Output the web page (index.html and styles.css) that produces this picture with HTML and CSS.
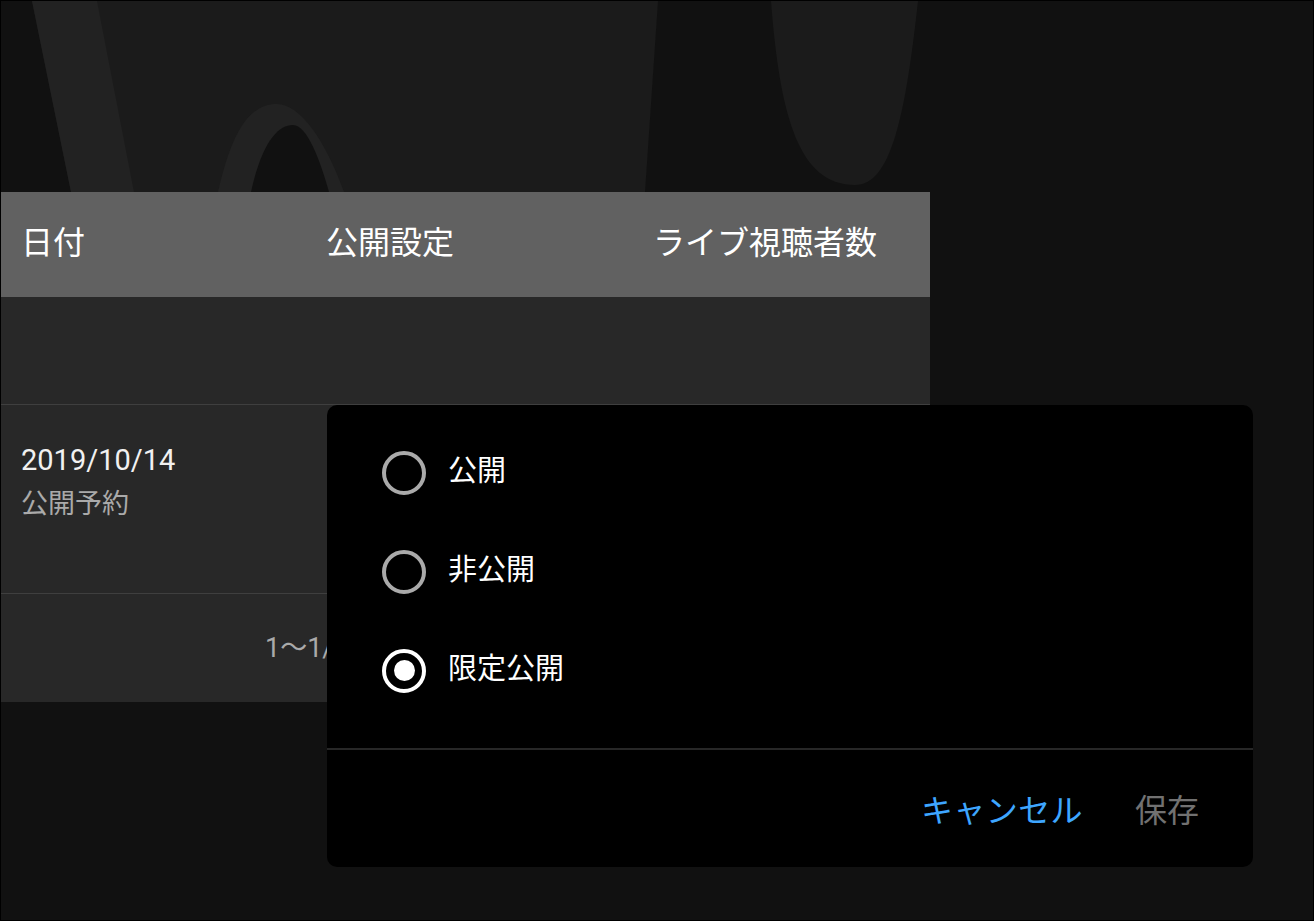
FILE: index.html
```html
<!DOCTYPE html>
<html lang="ja">
<head>
<meta charset="utf-8">
<title>公開設定</title>
<link rel="stylesheet" href="styles.css">
</head>
<body>
<div class="page">
  <div class="hero">
    <svg class="hero-art" width="1312" height="191" viewBox="1 1 1312 191" xmlns="http://www.w3.org/2000/svg">
      <rect x="1" y="1" width="1312" height="191" fill="#111111"/>
      <path d="M32 1 L658 1 L645 192 L71 192 Z" fill="#1b1b1b"/>
      <path d="M32 1 L97 1 L134 192 L71 192 Z" fill="#222222"/>
      <path d="M218 192 C232 130 250 104 277 104 C300 104 325 140 344 192 Z" fill="#222222"/>
      <path d="M251 192 C262 142 278 125 293 125 C307 125 320 160 329 192 Z" fill="#111111"/>
      <path d="M771 1 C780 120 800 185 855 185 C890 185 905 120 918 1 Z" fill="#1b1b1b"/>
    </svg>
  </div>

  <div class="table">
    <div class="thead">
      <div class="th">日付</div>
      <div class="th">公開設定</div>
      <div class="th">ライブ視聴者数</div>
    </div>
    <div class="row-empty"></div>
    <div class="row">
      <div class="cell-date">
        <div class="date">2019/10/14</div>
        <div class="status">公開予約</div>
      </div>
    </div>
    <div class="tfoot">
      <span class="range">1～1/1</span>
    </div>
  </div>

  <div class="dialog">
    <div class="options">
      <div class="option">
        <span class="radio"></span>
        <span class="label">公開</span>
      </div>
      <div class="option">
        <span class="radio"></span>
        <span class="label">非公開</span>
      </div>
      <div class="option">
        <span class="radio checked"><span class="dot"></span></span>
        <span class="label">限定公開</span>
      </div>
    </div>
    <div class="actions">
      <span class="btn btn-cancel">キャンセル</span>
      <span class="btn btn-save">保存</span>
    </div>
  </div>
</div>
</body>
</html>
```

FILE: styles.css
```css
* { box-sizing: border-box; }
html, body { margin: 0; padding: 0; background: #111111; }
body {
  font-family: Roboto, "Noto Sans CJK JP", sans-serif;
  color: #ffffff;
}
.page {
  position: relative;
  width: 1314px;
  height: 921px;
  border: 1px solid #000000;
  background: #111111;
  overflow: hidden;
}
.hero { height: 191px; }
.hero-art { display: block; }

.table { width: 929px; background: #282828; }
.thead {
  display: grid;
  grid-template-columns: 305px 327px 1fr;
  height: 105px;
  align-items: center;
  background: #616161;
  padding-left: 20px;
}
.th {
  font-size: 32px;
  color: #ffffff;
  line-height: 1;
  padding-bottom: 4px;
}
.row-empty {
  height: 108px;
  border-bottom: 1px solid #3f3f3f;
}
.row {
  height: 189px;
  border-bottom: 1px solid #3f3f3f;
  padding: 36px 0 0 20px;
}
.date {
  font-size: 29px;
  line-height: 38px;
  color: #f1f1f1;
}
.status {
  font-size: 27px;
  line-height: 50px;
  color: #aaaaaa;
}
.tfoot {
  height: 108px;
  padding: 34px 0 0 264px;
}
.range {
  font-size: 27px;
  color: #aaaaaa;
  line-height: 40px;
}

.dialog {
  position: absolute;
  left: 326px;
  top: 404px;
  width: 926px;
  height: 462px;
  background: #000000;
  border-radius: 10px;
  display: flex;
  flex-direction: column;
}
.options {
  padding: 18px 0 28px 55px;
  border-bottom: 2px solid #272727;
}
.option {
  height: 99px;
  display: flex;
  align-items: center;
  gap: 22px;
}
.radio {
  width: 44px;
  height: 44px;
  border: 4px solid #aaaaaa;
  border-radius: 50%;
  display: flex;
  align-items: center;
  justify-content: center;
  flex: none;
}
.radio.checked { border-color: #ffffff; }
.dot {
  width: 21px;
  height: 21px;
  border-radius: 50%;
  background: #ffffff;
}
.label {
  font-size: 29px;
  line-height: 1;
  color: #ffffff;
  padding-bottom: 2px;
}
.actions {
  flex: 1;
  display: flex;
  justify-content: flex-end;
  align-items: center;
  gap: 52px;
  padding-right: 54px;
  padding-top: 4px;
}
.btn {
  font-size: 32px;
  line-height: 1;
}
.btn-cancel { color: #3ea6ff; letter-spacing: 0.4px; }
.btn-save { color: #717171; }
```
